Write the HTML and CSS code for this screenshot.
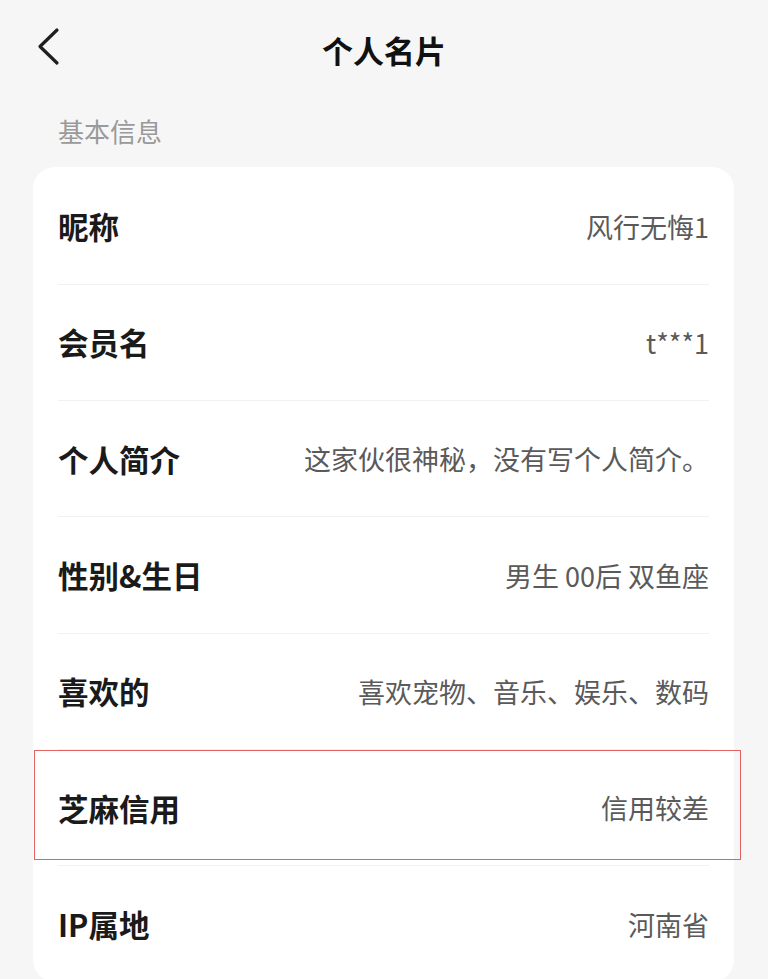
FILE: index.html
```html
<!DOCTYPE html>
<html lang="zh-CN">
<head>
  <meta charset="UTF-8" />
  <title>个人名片</title>
  <link rel="stylesheet" href="styles.css">
</head>
<body>

  <div class="topbar">
    <span class="back">
      <svg width="24" height="40" viewBox="0 0 24 40">
        <polyline points="20,3 3,19.5 20,36" fill="none" stroke="#1f1f1f" stroke-width="3.2" stroke-linecap="round" stroke-linejoin="round" />
      </svg>
    </span>
    <h1>个人名片</h1>
  </div>

  <div class="section-title">基本信息</div>

  <div class="card">
    <div class="row">
      <span class="label">昵称</span>
      <span class="value">风行无悔1</span>
    </div>
    <div class="row">
      <span class="label">会员名</span>
      <span class="value">t***1</span>
    </div>
    <div class="row">
      <span class="label">个人简介</span>
      <span class="value">这家伙很神秘，没有写个人简介。</span>
    </div>
    <div class="row">
      <span class="label">性别&amp;生日</span>
      <span class="value">男生 00后 双鱼座</span>
    </div>
    <div class="row">
      <span class="label">喜欢的</span>
      <span class="value">喜欢宠物、音乐、娱乐、数码</span>
    </div>
    <div class="row marked">
      <span class="label">芝麻信用</span>
      <span class="value">信用较差</span>
    </div>
    <div class="row">
      <span class="label">IP属地</span>
      <span class="value">河南省</span>
    </div>
  </div>

</body>
</html>
```

FILE: styles.css
```css
body {
  margin: 0;
  background: #f6f6f6;
  font-family: "Noto Sans CJK SC", "Noto Sans", sans-serif;
  color: #1a1a1a;
  overflow: hidden;
}
.topbar {
  position: relative;
  height: 98px;
  display: flex;
  align-items: center;
  justify-content: center;
}
.topbar h1 {
  margin: 0;
  font-size: 31px;
  font-weight: 700;
  color: #111;
}
.back {
  position: absolute;
  left: 37px;
  top: 27px;
  display: flex;
}
.section-title {
  margin: 15px 0 18px 58px;
  font-size: 26px;
  line-height: 36px;
  color: #9a9a9a;
}
.card {
  margin: 0 34px 0 33px;
  background: #fff;
  border-radius: 22px;
  padding: 1.5px 25px 0;
}
.row {
  position: relative;
  height: 115.33px;
  display: flex;
  align-items: center;
  justify-content: space-between;
  border-bottom: 1px solid #f1f1f1;
}
.row:last-child {
  border-bottom: none;
}
.label {
  font-size: 30.5px;
  font-weight: 700;
  color: #1a1a1a;
}
.value {
  font-size: 27px;
  color: #5a5a5a;
}
.marked::after {
  content: "";
  position: absolute;
  left: -24px;
  top: 0;
  width: 705px;
  height: 108px;
  border: 1px solid #e26262;
}
```
